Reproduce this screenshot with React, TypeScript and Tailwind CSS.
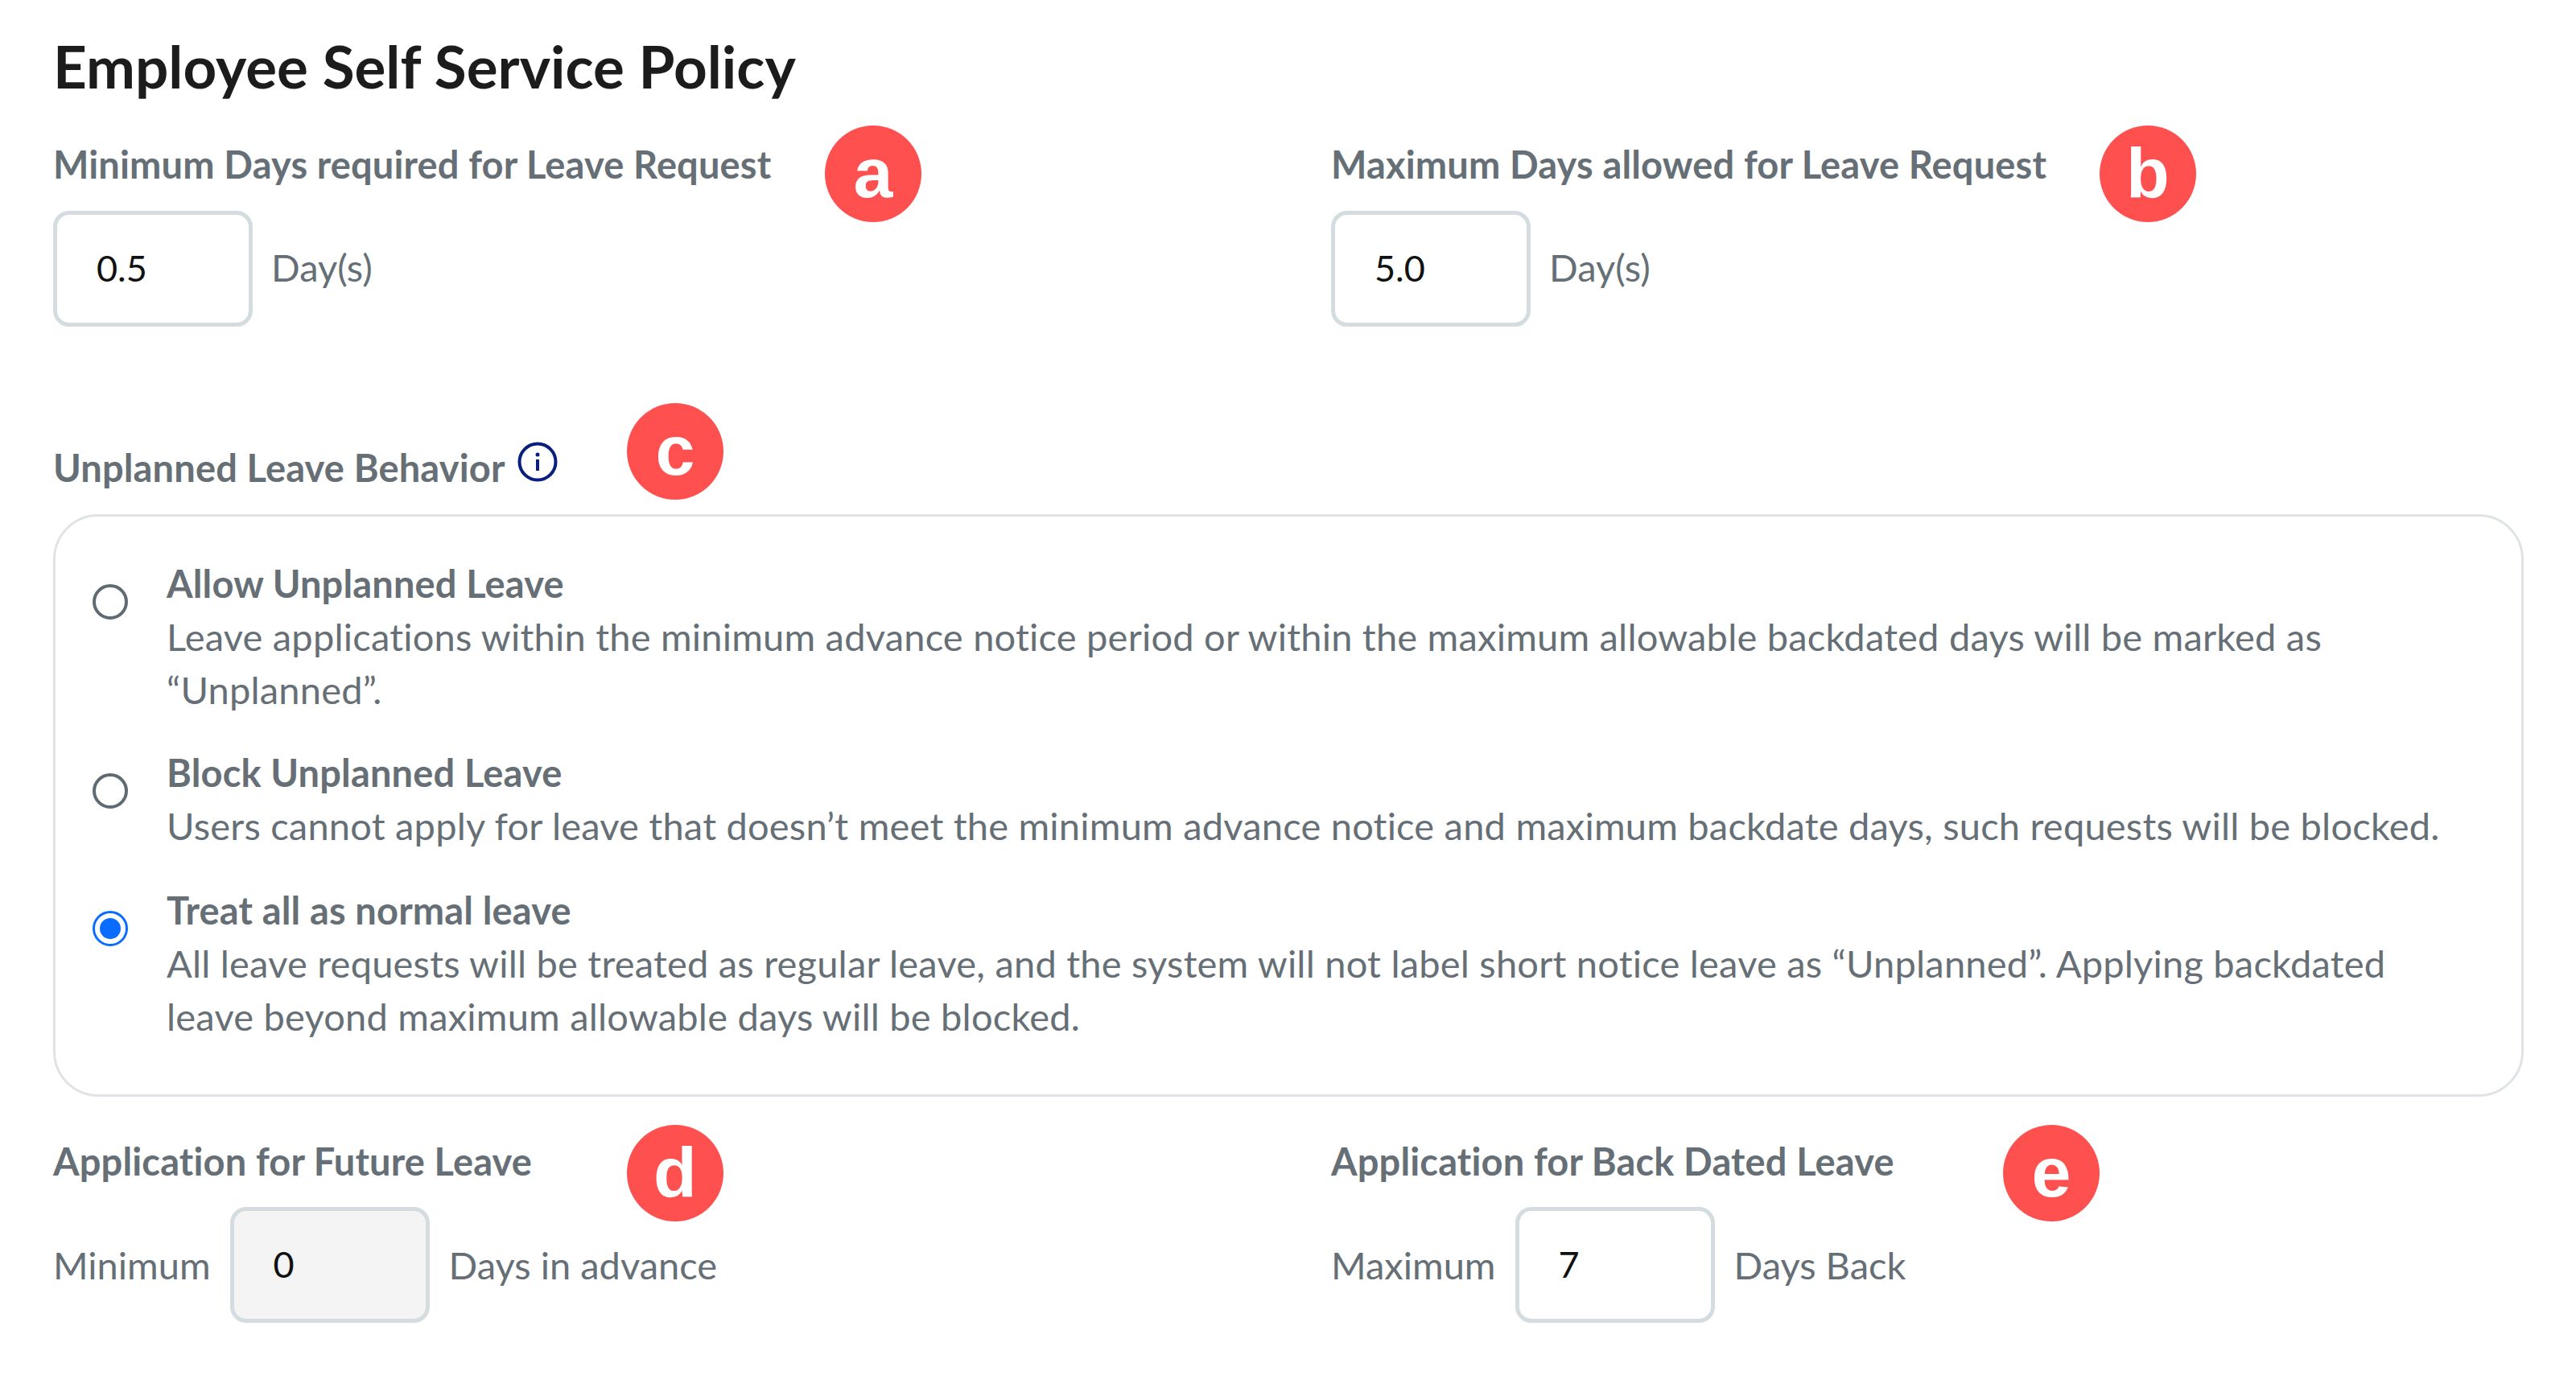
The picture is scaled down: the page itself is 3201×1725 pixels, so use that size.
const font = "font-['Lato','Noto_Sans',sans-serif]"

function Badge({ letter, className }: { letter: string; className: string }) {
  return (
    <div
      className={`absolute flex h-[120px] w-[120px] items-center justify-center rounded-full bg-[#ff5050] font-['Liberation_Sans',sans-serif] text-[88px] leading-none font-bold text-white ${className}`}
    >
      <span className="-mt-[2px]">{letter}</span>
    </div>
  )
}

function NumberBox({ value, muted }: { value: string; muted?: boolean }) {
  return (
    <div
      className={`flex h-[144px] w-[248px] shrink-0 items-center rounded-[20px] border-[5px] border-[#d5dce0] pl-[49px] text-[45px] text-[#111111] ${muted ? 'bg-[#f4f4f4]' : 'bg-white'}`}
    >
      {value}
    </div>
  )
}

function Radio({ checked }: { checked?: boolean }) {
  return (
    <div
      className={`mt-[34px] flex h-[44px] w-[44px] shrink-0 items-center justify-center rounded-full bg-white ${checked ? 'border-[3px] border-[#0a6cff]' : 'border-4 border-[#5f6b73]'}`}
    >
      {checked && <div className="h-[26px] w-[26px] rounded-full bg-[#0a6cff]" />}
    </div>
  )
}

function Option({ title, text, checked }: { title: string; text: string; checked?: boolean }) {
  return (
    <div className="flex gap-[48px]">
      <Radio checked={checked} />
      <div>
        <div className="text-[47px] leading-[66px] font-bold tracking-[0.15px] text-[#666f76]">{title}</div>
        <div className="text-[47px] leading-[66px] tracking-[0.21px] text-[#666f76]">{text}</div>
      </div>
    </div>
  )
}

export default function App() {
  return (
    <div className={`relative min-h-[1725px] bg-white pt-[44px] pr-[65px] pl-[66px] ${font}`}>
      <h1 className="text-[72.8px] leading-[76px] font-bold text-[#1c1c1c]">Employee Self Service Policy</h1>

      {/* Min / max days */}
      <div className="mt-[54px] grid grid-cols-[1588px_1fr]">
        <div>
          <div className="text-[47px] leading-[60px] font-bold tracking-[0.15px] text-[#666f76]">Minimum Days required for Leave Request</div>
          <div className="mt-[28px] flex items-center gap-[23px]">
            <NumberBox value="0.5" />
            <span className="-mt-[4px] text-[47px] text-[#666f76]">Day(s)</span>
          </div>
        </div>
        <div>
          <div className="text-[47px] leading-[60px] font-bold tracking-[0.15px] text-[#666f76]">Maximum Days allowed for Leave Request</div>
          <div className="mt-[28px] flex items-center gap-[23px]">
            <NumberBox value="5.0" />
            <span className="-mt-[4px] text-[47px] text-[#666f76]">Day(s)</span>
          </div>
        </div>
      </div>

      {/* Unplanned leave */}
      <div className="mt-[145px] flex items-center gap-[15px]">
        <span className="text-[47px] leading-[60px] font-bold tracking-[0.15px] text-[#666f76]">Unplanned Leave Behavior</span>
        <svg className="-mt-[14px]" width="50" height="50" viewBox="0 0 50 50" fill="none" stroke="#0a1f7d" strokeWidth="4">
          <circle cx="25" cy="25" r="22.5" />
          <path d="M25 22v14" />
          <circle cx="25" cy="16" r="1.5" fill="#0a1f7d" strokeWidth="2" />
        </svg>
      </div>
      <div className="mt-[28px] flex h-[724px] flex-col rounded-[56px] border-[3px] border-[#dfe3e6] pt-[50px] pr-[76px] pl-[46px]">
        <Option
          title="Allow Unplanned Leave"
          text="Leave applications within the minimum advance notice period or within the maximum allowable backdated days will be marked as “Unplanned”."
        />
        <div className="mt-[37px]">
          <Option
            title="Block Unplanned Leave"
            text="Users cannot apply for leave that doesn’t meet the minimum advance notice and maximum backdate days, such requests will be blocked."
          />
        </div>
        <div className="mt-[39px]">
          <Option
            checked
            title="Treat all as normal leave"
            text="All leave requests will be treated as regular leave, and the system will not label short notice leave as “Unplanned”. Applying backdated leave beyond maximum allowable days will be blocked."
          />
        </div>
      </div>

      {/* Future / back dated */}
      <div className="mt-[50px] grid grid-cols-[1588px_1fr]">
        <div>
          <div className="text-[47px] leading-[60px] font-bold tracking-[0.15px] text-[#666f76]">Application for Future Leave</div>
          <div className="mt-[27px] flex items-center gap-[24px] text-[47px] text-[#666f76]">
            <span>Minimum</span>
            <NumberBox value="0" muted />
            <span>Days in advance</span>
          </div>
        </div>
        <div>
          <div className="text-[47px] leading-[60px] font-bold tracking-[0.15px] text-[#666f76]">Application for Back Dated Leave</div>
          <div className="mt-[27px] flex items-center gap-[24px] text-[47px] text-[#666f76]">
            <span>Maximum</span>
            <NumberBox value="7" />
            <span>Days Back</span>
          </div>
        </div>
      </div>

      <Badge letter="a" className="top-[156px] left-[1025px]" />
      <Badge letter="b" className="top-[156px] left-[2609px]" />
      <Badge letter="c" className="top-[501px] left-[779px]" />
      <Badge letter="d" className="top-[1398px] left-[779px]" />
      <Badge letter="e" className="top-[1398px] left-[2489px]" />
    </div>
  )
}
